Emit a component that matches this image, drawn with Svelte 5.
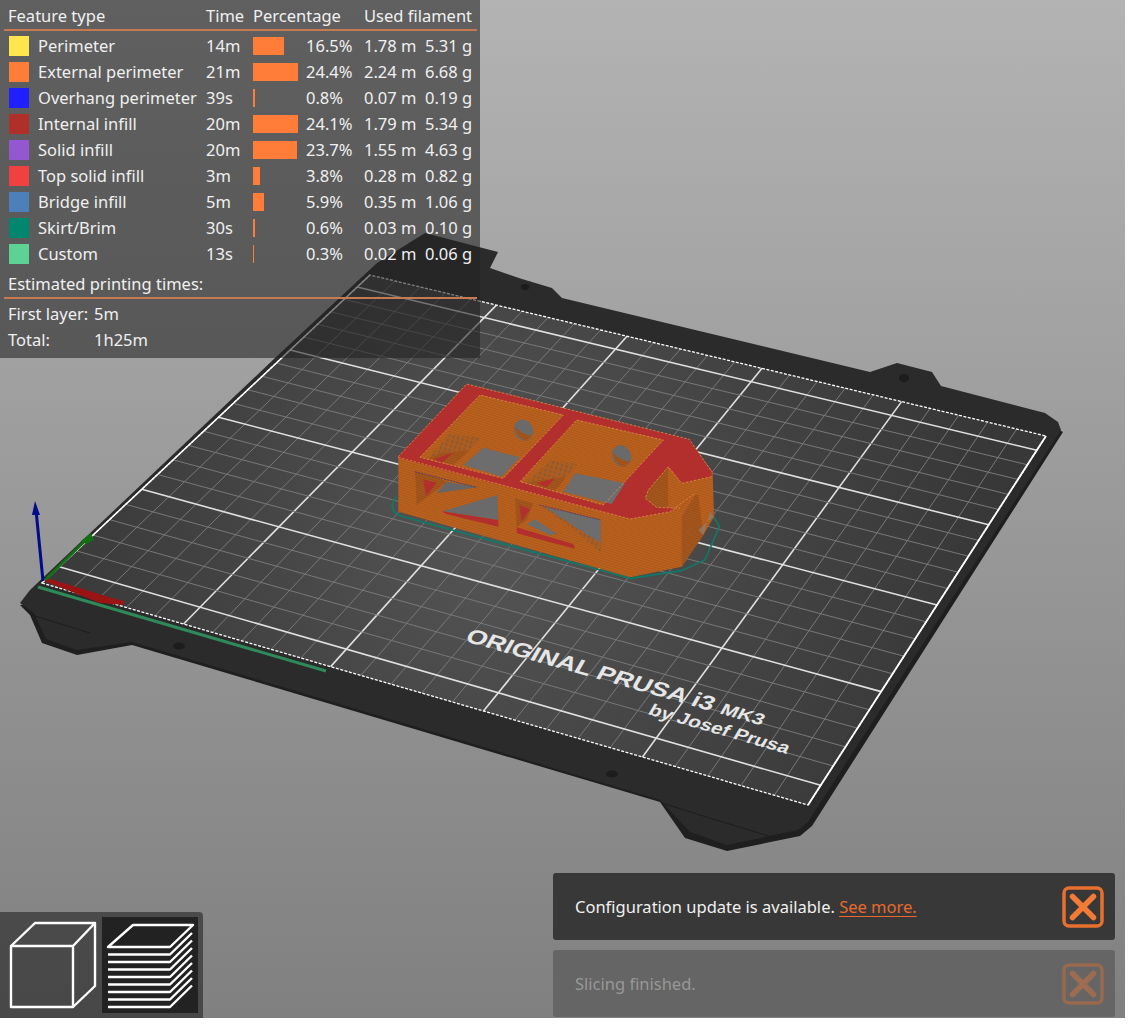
<script lang="ts">
  const features = [
    { name: "Perimeter", color: "#ffe64d", time: "14m", bar: 31, pct: "16.5%", len: "1.78 m", mass: "5.31 g" },
    { name: "External perimeter", color: "#ff7d38", time: "21m", bar: 45, pct: "24.4%", len: "2.24 m", mass: "6.68 g" },
    { name: "Overhang perimeter", color: "#1f1fff", time: "39s", bar: 2, pct: "0.8%", len: "0.07 m", mass: "0.19 g" },
    { name: "Internal infill", color: "#b03029", time: "20m", bar: 45, pct: "24.1%", len: "1.79 m", mass: "5.34 g" },
    { name: "Solid infill", color: "#9457d1", time: "20m", bar: 44, pct: "23.7%", len: "1.55 m", mass: "4.63 g" },
    { name: "Top solid infill", color: "#f04040", time: "3m", bar: 7, pct: "3.8%", len: "0.28 m", mass: "0.82 g" },
    { name: "Bridge infill", color: "#4d80ba", time: "5m", bar: 11, pct: "5.9%", len: "0.35 m", mass: "1.06 g" },
    { name: "Skirt/Brim", color: "#00876e", time: "30s", bar: 2, pct: "0.6%", len: "0.03 m", mass: "0.10 g" },
    { name: "Custom", color: "#5ed194", time: "13s", bar: 1, pct: "0.3%", len: "0.02 m", mass: "0.06 g" },
  ];

  // print area corners on screen: front left, front right, back right, back left
  const quad = [[42, 583], [808, 805], [1046, 436], [370, 275]];

  function makeProjection(q: number[][]) {
    const [[x0, y0], [x1, y1], [x2, y2], [x3, y3]] = q;
    const sx = x0 - x1 + x2 - x3;
    const sy = y0 - y1 + y2 - y3;
    const dx1 = x1 - x2, dx2 = x3 - x2, dy1 = y1 - y2, dy2 = y3 - y2;
    const den = dx1 * dy2 - dx2 * dy1;
    const g = (sx * dy2 - dx2 * sy) / den;
    const h = (dx1 * sy - sx * dy1) / den;
    const a = x1 - x0 + g * x1, b = x3 - x0 + h * x3;
    const d = y1 - y0 + g * y1, e = y3 - y0 + h * y3;
    return (u: number, v: number) => {
      const w = g * u + h * v + 1;
      return [(a * u + b * v + x0) / w, (d * u + e * v + y0) / w];
    };
  }

  const project = makeProjection(quad);
  const COLS = 25;
  const ROWS = 22;

  const gridLines: { p: number[]; q: number[]; bold: boolean }[] = [];
  for (let i = 1; i < COLS; i++) {
    const u = i / COLS;
    gridLines.push({ p: project(u, 0), q: project(u, 1), bold: i % 5 === 0 });
  }
  for (let j = 1; j < ROWS; j++) {
    const v = j / ROWS;
    gridLines.push({ p: project(0, v), q: project(1, v), bold: j % 5 === 1 });
  }
  const sheet = quad.map((c) => c.join(",")).join(" ");
</script>

<div class="page">
  <svg class="view" viewBox="0 0 1125 1018" width="1125" height="1018">
    <defs>
      <linearGradient id="sky" x1="0" y1="0" x2="0" y2="1">
        <stop offset="0" stop-color="#b3b3b3" />
        <stop offset="1" stop-color="#808080" />
      </linearGradient>
      <radialGradient id="sheetFill" gradientUnits="userSpaceOnUse" cx="500" cy="530" r="480">
        <stop offset="0" stop-color="#565656" />
        <stop offset="0.6" stop-color="#424242" />
        <stop offset="1" stop-color="#383838" />
      </radialGradient>
      <pattern id="wall" width="7" height="7" patternUnits="userSpaceOnUse" patternTransform="rotate(17)">
        <rect width="7" height="7" fill="#ba611e" />
        <rect width="7" height="2.5" fill="#aa581b" />
      </pattern>
      <pattern id="wallDark" width="7" height="7" patternUnits="userSpaceOnUse" patternTransform="rotate(17)">
        <rect width="7" height="7" fill="#a5561c" />
        <rect width="7" height="2.5" fill="#984e19" />
      </pattern>
      <pattern id="dotted" width="14" height="14" patternUnits="userSpaceOnUse" patternTransform="rotate(17)">
        <rect width="14" height="14" fill="#b05c1d" />
        <rect x="2" y="2" width="5" height="9" fill="#7d5a3e" />
      </pattern>
    </defs>

    <rect width="1125" height="1018" fill="url(#sky)" />

    <!-- steel sheet base -->
    <polygon
      fill="#1f1f1f"
      points="20,605 30,615 42,643 77,655 132,645 660,802 685,838 727,851 800,836 812,826 1063,432 1040,420 700,700 100,600"
    />
    <polygon
      fill="#2b2b2b"
      points="20,603 30,590 275,358 377,263 425,233 498,252 490,268 513,276 522,279 552,288 562,298 870,372 897,363 932,372 941,386 1045,413 1058,422 1061,430 808,822 798,830 727,845 690,832 660,800 132,642 77,650 46,639 34,613"
    />
    <polyline fill="none" stroke="#1d1d1d" stroke-width="1" points="662,803 700,815 775,838" />
    <polyline fill="none" stroke="#1d1d1d" stroke-width="1" points="32,615 90,633" />

    <ellipse cx="179" cy="646" rx="6" ry="3.5" fill="#1c1c1c" />
    <ellipse cx="612" cy="774" rx="6" ry="3.5" fill="#1c1c1c" />
    <ellipse cx="904" cy="378" rx="5" ry="4" fill="#1c1c1c" />
    <ellipse cx="525" cy="287" rx="4" ry="3" fill="#1c1c1c" />

    <polygon points={sheet} fill="url(#sheetFill)" />

    {#each gridLines as l}
      <line
        x1={l.p[0]}
        y1={l.p[1]}
        x2={l.q[0]}
        y2={l.q[1]}
        stroke={l.bold ? "#e0e0e0" : "#787878"}
        stroke-width={l.bold ? 1.6 : 1}
      />
    {/each}
    <polygon points={sheet} fill="none" stroke="#ffffff" stroke-width="1.3" stroke-dasharray="3 1.5" />
    <polyline points="{quad[1].join(',')} {quad[2].join(',')}" fill="none" stroke="#ffffff" stroke-width="1.8" />
    <polyline points="{quad[0].join(',')} {quad[3].join(',')}" fill="none" stroke="#ffffff" stroke-width="1.5" />

    <text class="logo" transform="matrix(1.18 0.335 -0.5 0.86 464 641)" font-size="21.5">ORIGINAL PRUSA i3<tspan font-size="17" dx="7">MK3</tspan></text>
    <text class="logo" transform="matrix(1.12 0.32 -0.5 0.86 647 714)" font-size="17.5">by Josef Prusa</text>

    <!-- skirt, sliced part. Coordinates read at 3x, hence the scale -->
    <g transform="translate(370 370) scale(0.33333)">
      <polyline
        fill="none"
        stroke="#0f7a66"
        stroke-width="5"
        points="78,380 66,405 72,425 92,438 690,600 782,625 935,602 1005,570 1048,470 1022,425"
      />
      <polygon fill="url(#wall)" points="85,260 290,42 955,208 1028,305 1032,440 1000,495 935,590 780,622 85,425" />
      <polygon fill="url(#wallDark)" points="935,440 975,375 985,375 1000,495 935,590" />
      <polygon fill="#8a8178" points="985,480 1030,440 1020,425 1000,495" opacity="0.7" />

      <polygon
        fill="#b22f2d"
        points="85,258 290,42 958,208 1025,305 1025,320 935,340 895,290 835,360 826,385 860,412 930,415 972,372 900,425 780,447 85,264"
      />
      <polygon fill="url(#wallDark)" points="835,360 895,290 895,410 860,412 826,385" />
      <polygon fill="url(#wall)" points="895,290 935,340 972,372 930,415 895,410" />

      <polygon fill="url(#wall)" points="150,262 330,75 580,135 400,325" />
      <polygon fill="url(#wall)" points="450,335 620,150 880,210 700,405" />

      <polygon fill="#6d6d6d" points="280,285 340,233 450,262 395,320" />
      <polygon fill="#6d6d6d" points="580,365 615,310 765,340 725,402" />
      <polygon fill="#6d6d6d" points="240,175 325,85 245,170" />

      <ellipse cx="461" cy="180" rx="28" ry="32" fill="#6a6a6a" transform="rotate(-28 461 180)" />
      <ellipse cx="755" cy="258" rx="28" ry="33" fill="#6a6a6a" transform="rotate(-28 755 258)" />
      <path d="M433 170 Q440 205 470 212 L488 195 Q470 200 433 170Z" fill="url(#wallDark)" />
      <path d="M727 248 Q735 285 765 292 L783 272 Q765 280 727 248Z" fill="url(#wallDark)" />

      <polygon fill="url(#dotted)" points="175,265 240,190 330,205 300,240 210,250" />
      <polygon fill="url(#wallDark)" points="175,265 210,250 300,240 250,285" />
      <polygon fill="#b22f2d" points="190,268 250,248 215,278" />
      <polygon fill="url(#dotted)" points="465,340 545,270 622,282 590,320 510,330" />
      <polygon fill="url(#wallDark)" points="465,340 510,330 590,320 555,362" />
      <polygon fill="#b22f2d" points="500,340 555,325 530,352" />

      <!-- front wall openings -->
      <polygon fill="#666666" points="200,370 230,335 322,352" />
      <polygon fill="url(#wallDark)" points="135,305 205,325 232,335 140,405" />
      <polygon fill="#b22f2d" points="160,328 200,338 168,378" />
      <polygon fill="#6a6a6a" points="218,424 382,375 385,450" />
      <polygon fill="#b22f2d" points="216,424 385,450 385,470 228,432" />
      <polygon fill="url(#dotted)" points="508,405 692,452 692,548 610,478" />
      <polygon fill="#6d6d6d" points="522,410 692,450 692,520" />
      <polygon fill="url(#wallDark)" points="435,385 490,400 470,450 440,470" />
      <polygon fill="#b22f2d" points="448,405 480,418 455,455" />
      <polygon fill="#6d6d6d" points="470,462 495,448 562,492 540,495" />
      <polygon fill="#b22f2d" points="440,472 610,522 615,536 440,490" />

      <g fill="none" stroke="#e8a055" stroke-width="2" stroke-dasharray="7 5">
        <polyline points="85,260 290,42 958,208 1025,305" />
        <polyline points="85,262 780,447 900,425 972,372" />
        <polygon points="150,262 330,75 580,135 400,325" />
        <polygon points="450,335 620,150 880,210 700,405" />
        <polyline points="1025,320 935,340 895,290 835,360 826,385 860,412 930,415" />
      </g>
      <line x1="135" y1="305" x2="320" y2="352" stroke="#2a2a8c" stroke-width="2" stroke-dasharray="6 3" />
      <line x1="508" y1="405" x2="692" y2="450" stroke="#2a2a8c" stroke-width="2" stroke-dasharray="6 3" />
    </g>

    <!-- origin axes -->
    <line x1="38" y1="587" x2="326" y2="671" stroke="#2f8a5a" stroke-width="3" />
    <polygon points="44,581 47,578 112,598 124,601 124,605 112,604 100,603" fill="#9a1414" />
    <line x1="45" y1="580" x2="88" y2="538" stroke="#136f13" stroke-width="3" />
    <polygon points="81,541 91,533 94,540 86,544" fill="#136f13" />
    <line x1="43" y1="581" x2="36" y2="510" stroke="#000c88" stroke-width="3" />
    <polygon points="35,501 40,515 32,515" fill="#000c88" />
  </svg>

  <section class="stats">
    <div class="cols head">
      <span class="span2">Feature type</span>
      <span>Time</span>
      <span class="span2">Percentage</span>
      <span class="span2">Used filament</span>
    </div>
    {#each features as f}
      <div class="cols">
        <i class="swatch" style:background={f.color}></i>
        <span>{f.name}</span>
        <span>{f.time}</span>
        <i class="bar" style:width="{f.bar}px"></i>
        <span>{f.pct}</span>
        <span>{f.len}</span>
        <span>{f.mass}</span>
      </div>
    {/each}
    <div class="estimate">Estimated printing times:</div>
    <div class="times"><span>First layer:</span><span>5m</span></div>
    <div class="times"><span>Total:</span><span>1h25m</span></div>
  </section>

  <nav class="views">
    <button class="view-btn" aria-label="3D view">
      <svg viewBox="0 0 96 96" width="96" height="96">
        <path class="glyph" d="M5 29H67V90H5ZM5 29 29 6H89L67 29M89 6V69L67 90" />
      </svg>
    </button>
    <button class="view-btn active" aria-label="Preview">
      <svg viewBox="0 0 96 96" width="96" height="96">
        <path class="glyph" d="M6 30 31 8H91L68 30Z" />
        <path class="glyph" d="M6 37.5H68L90 16M6 45H68L90 23.5M6 52.5H68L90 31M6 60H68L90 38.5M6 67.5H68L90 46M6 75H68L90 53.5M6 82.5H68L90 61M6 90H68L90 68.5" />
      </svg>
    </button>
  </nav>

  <div class="toasts">
    <div class="toast">
      <p>Configuration update is available. <a href="#more">See more.</a></p>
      <button class="close" aria-label="Close">
        <svg viewBox="0 0 42 42" width="42" height="42">
          <rect x="2" y="2" width="38" height="38" rx="5" />
          <path d="M10.5 10.5 31.5 31.5M31.5 10.5 10.5 31.5" />
        </svg>
      </button>
    </div>
    <div class="toast faded">
      <p>Slicing finished.</p>
      <button class="close" aria-label="Close">
        <svg viewBox="0 0 42 42" width="42" height="42">
          <rect x="2" y="2" width="38" height="38" rx="5" />
          <path d="M10.5 10.5 31.5 31.5M31.5 10.5 10.5 31.5" />
        </svg>
      </button>
    </div>
  </div>
</div>

<style>
  :global(body) {
    background: #fff;
  }
  .page {
    position: relative;
    width: 1125px;
    height: 1018px;
    overflow: hidden;
    font: 16.5px/26px "Noto Sans", sans-serif;
    color: #f0f0f0;
  }
  .view {
    position: absolute;
    inset: 0;
    display: block;
  }
  .logo {
    font-family: "Liberation Sans", sans-serif;
    font-weight: 700;
    fill: #e6e6e6;
  }
  .stats {
    position: absolute;
    left: 0;
    top: 0;
    width: 480px;
    height: 358px;
    box-sizing: border-box;
    padding-top: 3px;
    background: rgba(35, 35, 35, 0.575);
  }
  .cols {
    display: grid;
    grid-template-columns: 30px 168px 47px 53px 58px 61px auto;
    align-items: center;
    height: 26px;
    padding-left: 8px;
    white-space: nowrap;
  }
  .head {
    position: relative;
    height: 27px;
    margin-bottom: 3px;
    align-items: start;
  }
  .head::after,
  .estimate::after {
    content: "";
    position: absolute;
    left: 4px;
    right: 3px;
    bottom: -1px;
    height: 2px;
    background: #c57a52;
  }
  .span2 {
    grid-column: span 2;
  }
  .swatch {
    display: block;
    width: 20px;
    height: 20px;
    margin-left: 1px;
  }
  .bar {
    display: block;
    height: 18px;
    background: #ff7d38;
  }
  .estimate {
    position: relative;
    height: 27px;
    margin-top: 4px;
    padding: 0 8px;
    margin-bottom: 3px;
  }
  .times {
    display: grid;
    grid-template-columns: 86px auto;
    padding-left: 8px;
  }
  .views {
    position: absolute;
    left: 0;
    bottom: 0;
    width: 203px;
    height: 106px;
    box-sizing: border-box;
    padding: 5px 5px 5px 6px;
    display: flex;
    justify-content: space-between;
    background: rgba(35, 35, 35, 0.6);
    border-top-right-radius: 4px;
  }
  .view-btn {
    width: 96px;
    height: 96px;
    padding: 0;
    border: 0;
    background: none;
  }
  .view-btn svg {
    display: block;
  }
  .view-btn.active {
    background: #222;
  }
  .glyph {
    fill: none;
    stroke: #fff;
    stroke-width: 2.4;
    stroke-linejoin: round;
  }
  .toasts {
    position: absolute;
    left: 553px;
    top: 873px;
    width: 562px;
    display: flex;
    flex-direction: column;
    gap: 10px;
  }
  .toast {
    height: 67px;
    display: flex;
    align-items: center;
    justify-content: space-between;
    padding: 0 11px 0 22px;
    box-sizing: border-box;
    background: #383838;
    border-radius: 3px;
  }
  .toast p {
    margin: 0;
  }
  .toast a {
    color: #e8692c;
    text-decoration: underline;
    text-underline-offset: 3px;
    text-decoration-thickness: 1px;
  }
  .close {
    width: 42px;
    height: 42px;
    padding: 0;
    border: 0;
    background: none;
  }
  .close svg {
    display: block;
  }
  .close rect {
    fill: none;
    stroke: #e8702e;
    stroke-width: 3.5;
  }
  .close path {
    fill: none;
    stroke: #f37b35;
    stroke-width: 5.5;
    stroke-linecap: round;
  }
  .toast.faded {
    background: #656565;
    color: #989898;
  }
  .toast.faded .close {
    opacity: 0.4;
  }
</style>
